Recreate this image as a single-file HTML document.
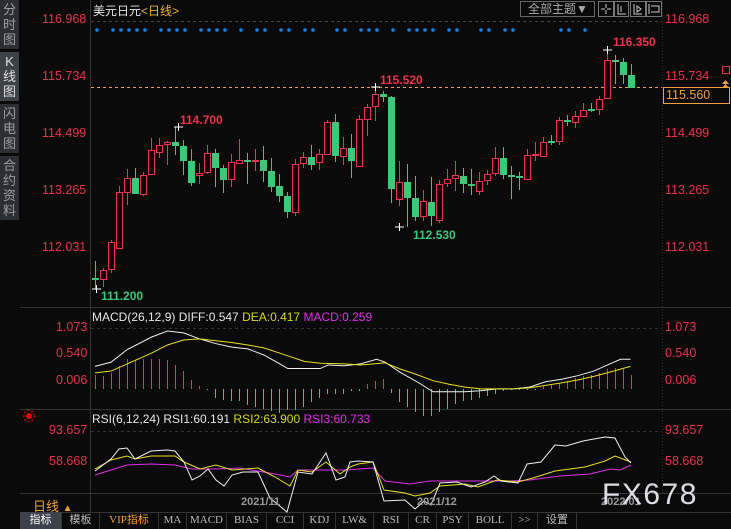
<!DOCTYPE html>
<html><head><meta charset="utf-8">
<style>
html,body{margin:0;padding:0;background:#0a0a0a;width:731px;height:529px;overflow:hidden;font-family:"Liberation Sans","Noto Sans CJK SC",sans-serif}
#side{position:absolute;left:0;top:0;width:19px}
.sb{background:#2b2e33;color:#9a9ea6;font-size:13px;line-height:15px;text-align:center;margin-bottom:3px;padding:2px 0}
.sb.on{background:#3d4148;color:#e0e0e0}
.ax{position:absolute;color:#e8334d;font-size:12.5px;}
.tab{position:absolute;top:512px;height:17px;font-size:11px;color:#bbb;line-height:17px;text-align:center;border-right:1px solid #333;font-family:"Liberation Serif","Noto Sans CJK SC",serif}
</style></head><body>
<div id="side">
<div class="sb">分<br>时<br>图</div>
<div class="sb on">K<br>线<br>图</div>
<div class="sb">闪<br>电<br>图</div>
<div class="sb">合<br>约<br>资<br>料</div>
</div>
<svg width="731" height="529" style="position:absolute;left:0;top:0" id="sv">
<line x1="90.5" y1="0" x2="90.5" y2="512" stroke="#333"/>
<line x1="662.5" y1="0" x2="662.5" y2="493" stroke="#333" stroke-dasharray="1,2"/>
<line x1="20" y1="307.5" x2="731" y2="307.5" stroke="#333"/>
<line x1="20" y1="409.5" x2="731" y2="409.5" stroke="#333"/>
<line x1="20" y1="493.5" x2="731" y2="493.5" stroke="#333"/>
<line x1="20" y1="512.5" x2="731" y2="512.5" stroke="#333"/>
<line x1="91" y1="21.5" x2="662" y2="21.5" stroke="#444" stroke-dasharray="3,3"/>
<line x1="91" y1="328.5" x2="662" y2="328.5" stroke="#333" stroke-dasharray="3,3"/>
<line x1="91" y1="431.5" x2="662" y2="431.5" stroke="#333" stroke-dasharray="3,3"/>
<line x1="91" y1="87.5" x2="662" y2="87.5" stroke="#f0a040" stroke-dasharray="3,3"/>
<g id="dots" fill="#1e80d8"></g>
<g id="cand"></g>
<g id="hist"></g>
<g transform="translate(85,305) scale(0.357)" fill="none" stroke-width="2.8">
<polyline stroke="#f0f0f0" points="28,172 73,160 118,125 186,90 231,73 276,78 321,95 366,108 411,118 456,123 501,140 546,165 568,178 614,178 659,178 681,168 727,170 772,165 817,152 840,160 885,190 930,215 975,243 1020,243 1065,243 1110,240 1155,235 1200,235 1245,230 1290,215 1335,208 1380,198 1425,185 1470,165 1500,152 1528,152"/>
<polyline stroke="#e8e020" points="28,190 73,185 118,165 186,135 231,112 276,98 321,95 366,100 411,105 456,112 501,120 546,135 614,158 659,163 727,165 772,168 840,162 885,180 930,195 975,212 1020,222 1065,230 1110,235 1200,235 1245,232 1290,225 1335,218 1380,210 1425,200 1470,188 1528,172"/>
</g>
<g fill="none" stroke-width="1">
<polyline stroke="#e030e8" points="95,475 111,470 127,465 151,464 175,465 192,469 216,469 240,468 275,474 290,477 298,470 326,470 345,470 373,468 385,481 410,484 430,481 470,481 510,481 530,480 560,476 590,474 610,469 620,470 631,465"/>
<polyline stroke="#e8e020" points="95,469 111,460 127,456 135,459 151,456 175,456 184,462 200,469 216,465 232,470 258,468 275,477 290,486 298,470 312,472 326,462 340,474 350,467 358,464 373,462 384,490 405,493 415,496 430,493 440,486 465,484 478,487 497,480 518,482 533,478 555,471 585,467 605,461 615,456 631,462"/>
<polyline stroke="#f0f0f0" points="95,471 111,459 119,449 127,448 135,459 151,451 167,450 175,451 184,462 192,480 200,476 208,469 216,480 224,486 232,475 243,472 258,472 270,498 287,512 298,472 312,474 326,453 336,480 345,477 350,462 358,461 373,462 384,501 405,500 415,509 424,501 431,505 440,483 457,482 471,487 485,482 494,476 501,481 518,483 527,464 541,462 555,445 566,446 583,441 605,437 615,438 625,457 631,463"/>
</g>
<g stroke="#fff" stroke-width="1">
<path d="M174 127h9M178.5 123v8M92 289h9M96.5 285v8M371 87h9M375.5 83v8M395 227h9M399.5 223v8M603 50h9M607.5 46v8"/>
</g>
<rect x="663.5" y="87.5" width="66" height="16" fill="#0a0a0a" stroke="#f0a040"/>
<rect x="722.5" y="66.5" width="7" height="7" fill="none" stroke="#e8334d"/>
<path d="M722 84l3.5-4 3.5 4zM722 88l3.5-4 3.5 4z" fill="#f0a040"/>
<rect x="520.5" y="1.5" width="74" height="15" fill="none" stroke="#666"/>
<rect x="598.5" y="1.5" width="15" height="15" fill="none" stroke="#777"/>
<rect x="614.5" y="1.5" width="14" height="15" fill="none" stroke="#777"/>
<rect x="630.5" y="1.5" width="15" height="15" fill="none" stroke="#777"/>
<rect x="646.5" y="1.5" width="15" height="15" fill="none" stroke="#777"/>
<path d="M606 4v4M606 10v4M601 9h4M607 9h4M618 4v10h8M621 6v6M634 4v10h8M637 6l4 3-4 3zM649 4v10M651 6h8v6h-8" stroke="#ccc" fill="none"/>
<circle cx="29" cy="416" r="3" fill="#e00"/><circle cx="29" cy="416" r="5.5" fill="none" stroke="#e00" stroke-dasharray="2,2"/>
</svg>
<div style="position:absolute;left:93px;top:2px;font-size:12px;color:#e8e8e8">美元日元<span style="color:#f0b030">&lt;日线&gt;</span></div>
<div style="position:absolute;left:521px;top:2px;width:74px;font-size:12px;color:#aaa;text-align:center;line-height:14px">全部主题▼</div>
<div class="ax" style="left:42px;top:12px">116.968</div>
<div class="ax" style="left:42px;top:69px">115.734</div>
<div class="ax" style="left:42px;top:126px">114.499</div>
<div class="ax" style="left:42px;top:183px">113.265</div>
<div class="ax" style="left:42px;top:240px">112.031</div>
<div class="ax" style="left:665px;top:12px">116.968</div>
<div class="ax" style="left:665px;top:69px">115.734</div>
<div class="ax" style="left:665px;top:126px">114.499</div>
<div class="ax" style="left:665px;top:183px">113.265</div>
<div class="ax" style="left:665px;top:240px">112.031</div>
<div style="position:absolute;left:666px;top:88px;font-size:12.5px;color:#f0a040">115.560</div>
<div class="ax" style="left:56px;top:320px">1.073</div>
<div class="ax" style="left:56px;top:346px">0.540</div>
<div class="ax" style="left:56px;top:373px">0.006</div>
<div class="ax" style="left:665px;top:320px">1.073</div>
<div class="ax" style="left:665px;top:346px">0.540</div>
<div class="ax" style="left:665px;top:373px">0.006</div>
<div class="ax" style="left:49px;top:423px">93.657</div>
<div class="ax" style="left:49px;top:454px">58.668</div>
<div class="ax" style="left:665px;top:423px">93.657</div>
<div class="ax" style="left:665px;top:454px">58.668</div>
<div style="position:absolute;left:180px;top:113px;font-size:12px;font-weight:bold;color:#f0344e">114.700</div>
<div style="position:absolute;left:101px;top:289px;font-size:12px;font-weight:bold;color:#3cc87a">111.200</div>
<div style="position:absolute;left:380px;top:73px;font-size:12px;font-weight:bold;color:#f0344e">115.520</div>
<div style="position:absolute;left:413px;top:228px;font-size:12px;font-weight:bold;color:#3cc87a">112.530</div>
<div style="position:absolute;left:613px;top:35px;font-size:12px;font-weight:bold;color:#f0344e">116.350</div>
<div style="position:absolute;left:92px;top:310px;font-size:12px;color:#e8e8e8">MACD(26,12,9) DIFF:0.547 <span style="color:#d8d820">DEA:0.417</span> <span style="color:#e030e8">MACD:0.259</span></div>
<div style="position:absolute;left:92px;top:412px;font-size:12px;color:#e8e8e8">RSI(6,12,24) RSI1:60.191 <span style="color:#d8d820">RSI2:63.900</span> <span style="color:#e030e8">RSI3:60.733</span></div>
<div style="position:absolute;left:241px;top:496px;font-size:11px;font-weight:bold;color:#999">2021/11</div>
<div style="position:absolute;left:417px;top:496px;font-size:11px;font-weight:bold;color:#999">2021/12</div>
<div style="position:absolute;left:601px;top:496px;font-size:11px;font-weight:bold;color:#999">2022/01</div>
<div style="position:absolute;left:602px;top:478px;font-size:30px;color:#e8e8ee;letter-spacing:1.5px;opacity:.95">FX678</div>
<div style="position:absolute;left:33px;top:496px;font-size:13px;color:#f0a030">日线 <span style="font-size:10px">▲</span></div>
<div class="tab" style="left:20px;width:41px;background:#3c414b;color:#fff">指标</div>
<div class="tab" style="left:62px;width:37px">模板</div>
<div class="tab" style="left:100px;width:58px;color:#f0a030">VIP指标</div>
<div class="tab" style="left:159px;width:27px">MA</div>
<div class="tab" style="left:187px;width:39px">MACD</div>
<div class="tab" style="left:227px;width:39px">BIAS</div>
<div class="tab" style="left:267px;width:36px">CCI</div>
<div class="tab" style="left:304px;width:31px">KDJ</div>
<div class="tab" style="left:336px;width:37px">LW&amp;</div>
<div class="tab" style="left:374px;width:34px">RSI</div>
<div class="tab" style="left:409px;width:27px">CR</div>
<div class="tab" style="left:437px;width:31px">PSY</div>
<div class="tab" style="left:469px;width:42px">BOLL</div>
<div class="tab" style="left:512px;width:25px">&gt;&gt;</div>
<div class="tab" style="left:538px;width:38px">设置</div>
<script>
var NS="http://www.w3.org/2000/svg";
function el(p,t,a){var e=document.createElementNS(NS,t);for(var k in a)e.setAttribute(k,a[k]);p.appendChild(e);return e;}
var C=[["g",278,279,261,289],["r",270,279,268,287],["r",242,269,240,273],["r",192,248,186,248],["r",178,192,169,205],["g",178,194,168,194],["r",175,194,172,196],["r",150,174,138,174],["r",145,152,138,158],["r",142,144,141,165],["g",142,146,127,155],["g",146,161,140,175],["g",161,183,149,186],["r",173,175,163,184],["r",153,172,145,174],["g",153,168,149,187],["g",168,180,165,193],["r",162,179,154,187],["r",160,163,139,163],["g",160,161,153,184],["r",160,161,149,171],["g",160,171,146,182],["g",171,187,158,192],["g",186,196,174,202],["g",196,212,192,218],["r",164,212,159,216],["r",157,163,152,168],["g",157,165,145,170],["r",154,162,149,170],["r",122,154,120,154],["g",122,156,114,162],["r",148,156,137,165],["g",148,161,134,178],["r",119,166,115,166],["r",107,119,104,136],["r",94,106,90,121],["g",94,97,91,102],["g",97,189,96,203],["r",182,199,161,206],["g",182,198,164,227],["g",198,217,176,221],["r",201,216,190,221],["g",202,216,177,226],["r",184,220,180,223],["r",179,183,169,187],["r",175,178,161,191],["g",176,184,168,193],["g",184,186,169,195],["r",181,191,172,195],["r",174,180,170,185],["r",158,173,147,176],["g",158,175,147,179],["g",175,177,166,199],["g",176,177,172,190],["r",155,179,149,179],["r",154,155,142,161],["r",142,156,137,156],["g",141,142,135,145],["r",120,141,117,145],["g",120,121,115,126],["r",116,122,111,128],["r",110,116,103,116],["g",109,111,103,112],["r",99,109,96,115],["r",60,98,50,99],["g",60,62,55,84],["g",62,75,58,84],["g",75,88,64,88]];
var g=document.getElementById("cand");
C.forEach(function(c,i){var x=95+8*i,col=c[0]=="r"?"#f0344e":"#3cc87a";
el(g,"rect",{x:x,y:c[3],width:1,height:c[4]-c[3],fill:col});
var h=Math.max(c[2]-c[1],1);
if(c[0]=="r")el(g,"rect",{x:x-2.5,y:c[1]+.5,width:6,height:h,fill:"#0a0a0a",stroke:col});
else el(g,"rect",{x:x-3,y:c[1],width:7,height:Math.max(h,2),fill:col});});
var H=[375,376,373,366,359,360,359,359,359,360,365,371,380,386,389,398,400,401,401,405,407,409,411,413,410,410,407,402,398,394,394,394,391,391,384,381,379,393,402,407,412,416,416,412,409,404,401,400,398,396,394,391,390,389,389,389,386,385,383,381,378,376,375,373,369,368,369,375];
var hg=document.getElementById("hist");
H.forEach(function(y,i){var x=95+8*i;var t=Math.min(y,389),b=Math.max(y,389);el(hg,"rect",{x:x,y:t,width:1,height:Math.max(b-t,1),fill:y<389?"#f0344e":"#3cc87a"});});
var D=[97,113,121,129,137,145,161,169,177,185,201,209,217,225,241,257,265,281,289,305,313,337,345,361,369,377,393,409,417,425,433,449,457,481,489,505,513,561,569,585];
var dg=document.getElementById("dots");
D.forEach(function(x){el(dg,"circle",{cx:x,cy:30,r:1.8});});
</script>
</body></html>
